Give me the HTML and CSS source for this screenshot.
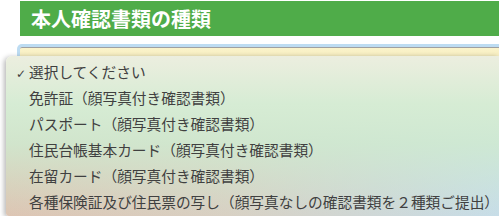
FILE: index.html
```html
<!DOCTYPE html>
<html>
<head>
    <meta charset="utf-8">
    <link rel="stylesheet" href="styles.css">
</head>
<body>
    <div class="page">
        <h2 class="title">本人確認書類の種類</h2>
        <div class="field">
            <div class="select"></div>
            <ul class="menu">
                <li class="selected"><span class="check">✓</span>選択してください</li>
                <li>免許証（顔写真付き確認書類）</li>
                <li>パスポート（顔写真付き確認書類）</li>
                <li>住民台帳基本カード（顔写真付き確認書類）</li>
                <li>在留カード（顔写真付き確認書類）</li>
                <li>各種保険証及び住民票の写し（顔写真なしの確認書類を２種類ご提出）</li>
            </ul>
        </div>
    </div>
</body>
</html>
```

FILE: styles.css
```css
body {
    margin: 0;
    background: #fff;
    font-family: "Noto Sans CJK JP", "Noto Sans", sans-serif;
}
.page {
    padding: 1px 0 0 20px;
}
.title {
    margin: 0;
    height: 35px;
    line-height: 35px;
    padding-left: 11px;
    background: #4fac49;
    color: #fff;
    font-size: 20px;
    font-weight: bold;
}
.field {
    margin-top: 11px;
}
.select {
    height: 8px;
    background: linear-gradient(to bottom, #fbf4cb, #f6edc0);
    border-top: 1px solid #a0a0a0;
    border-radius: 2px 0 0 0;
    box-shadow: 0 0 0 3px #bddcf2;
}
.menu {
    margin: 0 0 0 -14px;
    padding: 3px 0 1px;
    list-style: none;
    overflow: hidden;
    border-radius: 6px 0 0 3px;
    box-shadow: -2px 1px 5px rgba(0, 0, 0, 0.28);
    background:
        linear-gradient(to bottom, #eceedf 0%, #d6ecd4 30%, rgba(207, 234, 208, 0.85) 55%, rgba(207, 234, 208, 0) 100%),
        linear-gradient(to right, #ddc5b3 0%, #d8d0c3 45%, #c7dde8 100%);
}
.menu li {
    height: 26px;
    line-height: 26px;
    padding-left: 23px;
    font-size: 14.7px;
    color: #404040;
    white-space: nowrap;
}
.menu .check {
    display: inline-block;
    width: 13px;
    margin-left: -13px;
    font-family: "DejaVu Sans", sans-serif;
    font-size: 12px;
}
```
